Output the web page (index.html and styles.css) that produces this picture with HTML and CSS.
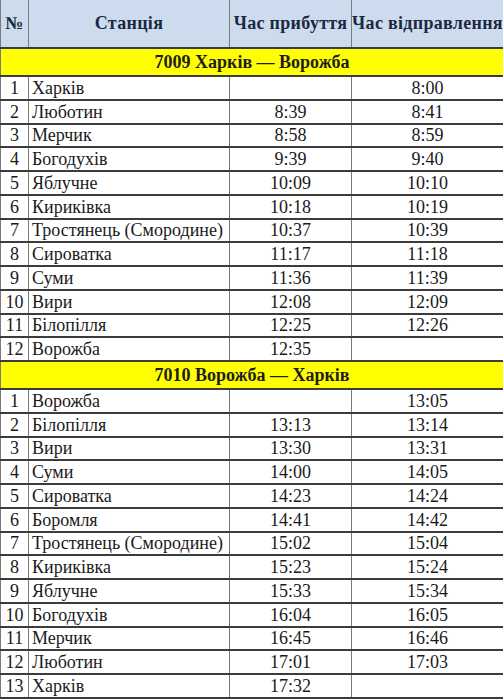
FILE: index.html
```html
<!DOCTYPE html>
<html lang="uk">
<head>
<meta charset="utf-8">
<link rel="stylesheet" href="styles.css">
</head>
<body>
<table class="tt">
  <colgroup>
    <col class="c-num"><col class="c-st"><col class="c-arr"><col class="c-dep">
  </colgroup>
  <thead>
    <tr class="head">
      <th>№</th><th>Станція</th><th>Час прибуття</th><th>Час відправлення</th>
    </tr>
  </thead>
  <tbody>
    <tr class="sec"><td colspan="4">7009 Харків — Ворожба</td></tr>
    <tr class="row"><td class="n">1</td><td class="s">Харків</td><td class="t"></td><td class="t">8:00</td></tr>
    <tr class="row"><td class="n">2</td><td class="s">Люботин</td><td class="t">8:39</td><td class="t">8:41</td></tr>
    <tr class="row"><td class="n">3</td><td class="s">Мерчик</td><td class="t">8:58</td><td class="t">8:59</td></tr>
    <tr class="row"><td class="n">4</td><td class="s">Богодухів</td><td class="t">9:39</td><td class="t">9:40</td></tr>
    <tr class="row"><td class="n">5</td><td class="s">Яблучне</td><td class="t">10:09</td><td class="t">10:10</td></tr>
    <tr class="row"><td class="n">6</td><td class="s">Кириківка</td><td class="t">10:18</td><td class="t">10:19</td></tr>
    <tr class="row"><td class="n">7</td><td class="s">Тростянець (Смородине)</td><td class="t">10:37</td><td class="t">10:39</td></tr>
    <tr class="row"><td class="n">8</td><td class="s">Сироватка</td><td class="t">11:17</td><td class="t">11:18</td></tr>
    <tr class="row"><td class="n">9</td><td class="s">Суми</td><td class="t">11:36</td><td class="t">11:39</td></tr>
    <tr class="row"><td class="n">10</td><td class="s">Вири</td><td class="t">12:08</td><td class="t">12:09</td></tr>
    <tr class="row"><td class="n">11</td><td class="s">Білопілля</td><td class="t">12:25</td><td class="t">12:26</td></tr>
    <tr class="row"><td class="n">12</td><td class="s">Ворожба</td><td class="t">12:35</td><td class="t"></td></tr>
    <tr class="sec"><td colspan="4">7010 Ворожба — Харків</td></tr>
    <tr class="row"><td class="n">1</td><td class="s">Ворожба</td><td class="t"></td><td class="t">13:05</td></tr>
    <tr class="row"><td class="n">2</td><td class="s">Білопілля</td><td class="t">13:13</td><td class="t">13:14</td></tr>
    <tr class="row"><td class="n">3</td><td class="s">Вири</td><td class="t">13:30</td><td class="t">13:31</td></tr>
    <tr class="row"><td class="n">4</td><td class="s">Суми</td><td class="t">14:00</td><td class="t">14:05</td></tr>
    <tr class="row"><td class="n">5</td><td class="s">Сироватка</td><td class="t">14:23</td><td class="t">14:24</td></tr>
    <tr class="row"><td class="n">6</td><td class="s">Боромля</td><td class="t">14:41</td><td class="t">14:42</td></tr>
    <tr class="row"><td class="n">7</td><td class="s">Тростянець (Смородине)</td><td class="t">15:02</td><td class="t">15:04</td></tr>
    <tr class="row"><td class="n">8</td><td class="s">Кириківка</td><td class="t">15:23</td><td class="t">15:24</td></tr>
    <tr class="row"><td class="n">9</td><td class="s">Яблучне</td><td class="t">15:33</td><td class="t">15:34</td></tr>
    <tr class="row"><td class="n">10</td><td class="s">Богодухів</td><td class="t">16:04</td><td class="t">16:05</td></tr>
    <tr class="row"><td class="n">11</td><td class="s">Мерчик</td><td class="t">16:45</td><td class="t">16:46</td></tr>
    <tr class="row"><td class="n">12</td><td class="s">Люботин</td><td class="t">17:01</td><td class="t">17:03</td></tr>
    <tr class="row"><td class="n">13</td><td class="s">Харків</td><td class="t">17:32</td><td class="t"></td></tr>
  </tbody>
</table>
</body>
</html>
```

FILE: styles.css
```css
html, body {
  margin: 0;
  padding: 0;
  background: #ffffff;
}

.tt {
  width: 503px;
  table-layout: fixed;
  border-collapse: collapse;
  color: #1a1a1a;
}

.tt th,
.tt td {
  font-family: "Liberation Serif", "Times New Roman", Tinos, "DejaVu Serif", serif;
  padding: 0;
  border-left: 1px solid #7a7a7a;
  border-right: 1px solid #7a7a7a;
  border-top: 2px solid #3c3c3c;
  border-bottom: 2px solid #3c3c3c;
  white-space: nowrap;
  overflow: hidden;
}

.c-num { width: 28px; }
.c-st { width: 201px; }
.c-arr { width: 122px; }
.c-dep { width: 152px; }

.head th {
  height: 47px;
  background: #cddbee;
  color: #1c2740;
  font-weight: bold;
  font-size: 18px;
  letter-spacing: 0.3px;
  text-align: center;
  vertical-align: middle;
  border-top: none;
}

.sec td {
  height: 26px;
  background: #ffff00;
  color: #1e1e1e;
  font-weight: bold;
  font-size: 18px;
  text-align: center;
  vertical-align: middle;
}

.row td {
  font-size: 18px;
  height: 21.76px;
  line-height: 20px;
  vertical-align: middle;
}

.n { text-align: center; }
.t { text-align: center; }
.tt td.s { text-align: left; padding-left: 3px; }
```
